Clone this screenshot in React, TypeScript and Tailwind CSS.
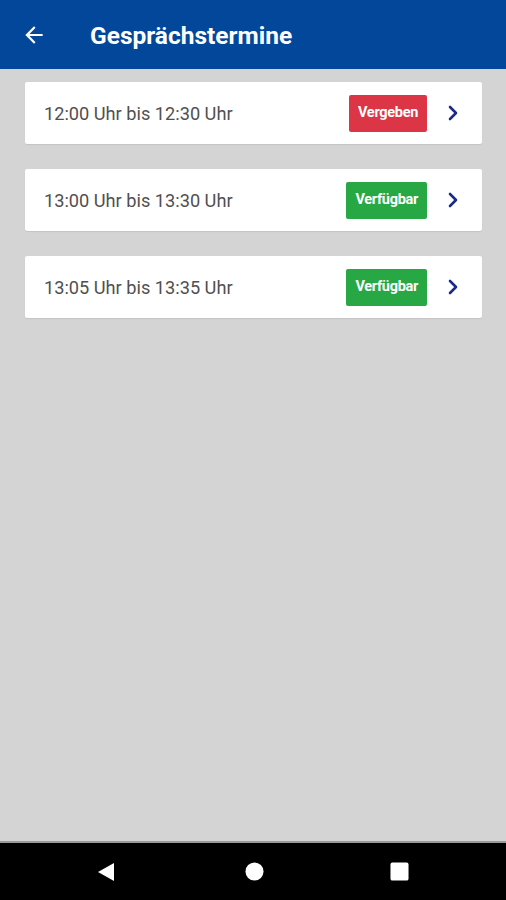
import { ChevronRight } from 'lucide-react'

const slots = [
  { time: '12:00 Uhr bis 12:30 Uhr', status: 'Vergeben' },
  { time: '13:00 Uhr bis 13:30 Uhr', status: 'Verfügbar' },
  { time: '13:05 Uhr bis 13:35 Uhr', status: 'Verfügbar' },
]

export default function App() {
  return (
    <div className="flex flex-col h-[900px] w-[506px] bg-[#d4d4d4] font-['Roboto',sans-serif]">
      {/* Toolbar */}
      <div className="h-[69px] bg-[#02479a] flex items-center shrink-0">
        <svg width="26" height="26" viewBox="0 0 24 24" className="ml-[21px] mt-[1px]">
          <path d="M20 11H7.83l5.59-5.59L12 4l-8 8 8 8 1.41-1.41L7.83 13H20v-2z" fill="#fff" />
        </svg>
        <h1 className="ml-[43px] mt-[3px] text-white text-[24.5px] font-bold">Gesprächstermine</h1>
      </div>

      {/* Liste */}
      <div className="flex-1 flex flex-col gap-[25px] px-[25px] pt-[13px]">
        {slots.map((s) => (
          <div key={s.time} className="h-[62px] w-[457px] bg-white rounded-[2px] flex items-center pl-[19px] pr-[17px] shadow-[0_1px_1px_rgba(0,0,0,0.08)]">
            <span className="flex-1 text-[18.2px] text-[#505050] mt-[2px]">{s.time}</span>
            <span
              className={`h-[37px] px-[9px] flex items-center rounded-[2px] text-white text-[14.5px] font-bold tracking-[-0.3px] ${
                s.status === 'Vergeben' ? 'bg-[#dc3545]' : 'bg-[#28a745]'
              }`}
            >
              {s.status}
            </span>
            <ChevronRight className="ml-[14px] text-[#1a2a8a]" size={24} strokeWidth={2.6} />
          </div>
        ))}
      </div>

      {/* Navigationsleiste */}
      <div className="h-[59px] bg-black border-t-[2px] border-[#9a9a9a] flex items-center shrink-0">
        <svg width="18" height="18" viewBox="0 0 18 18" className="ml-[97px]">
          <path d="M17 0 L17 18 L1 9 Z" fill="#fff" />
        </svg>
        <svg width="19" height="19" viewBox="0 0 20 20" className="ml-[130px]">
          <circle cx="10" cy="10" r="9.5" fill="#fff" />
        </svg>
        <svg width="19" height="19" viewBox="0 0 20 20" className="ml-[126px]">
          <rect x="0.5" y="0.5" width="19" height="19" rx="2" fill="#fff" />
        </svg>
      </div>
    </div>
  )
}
